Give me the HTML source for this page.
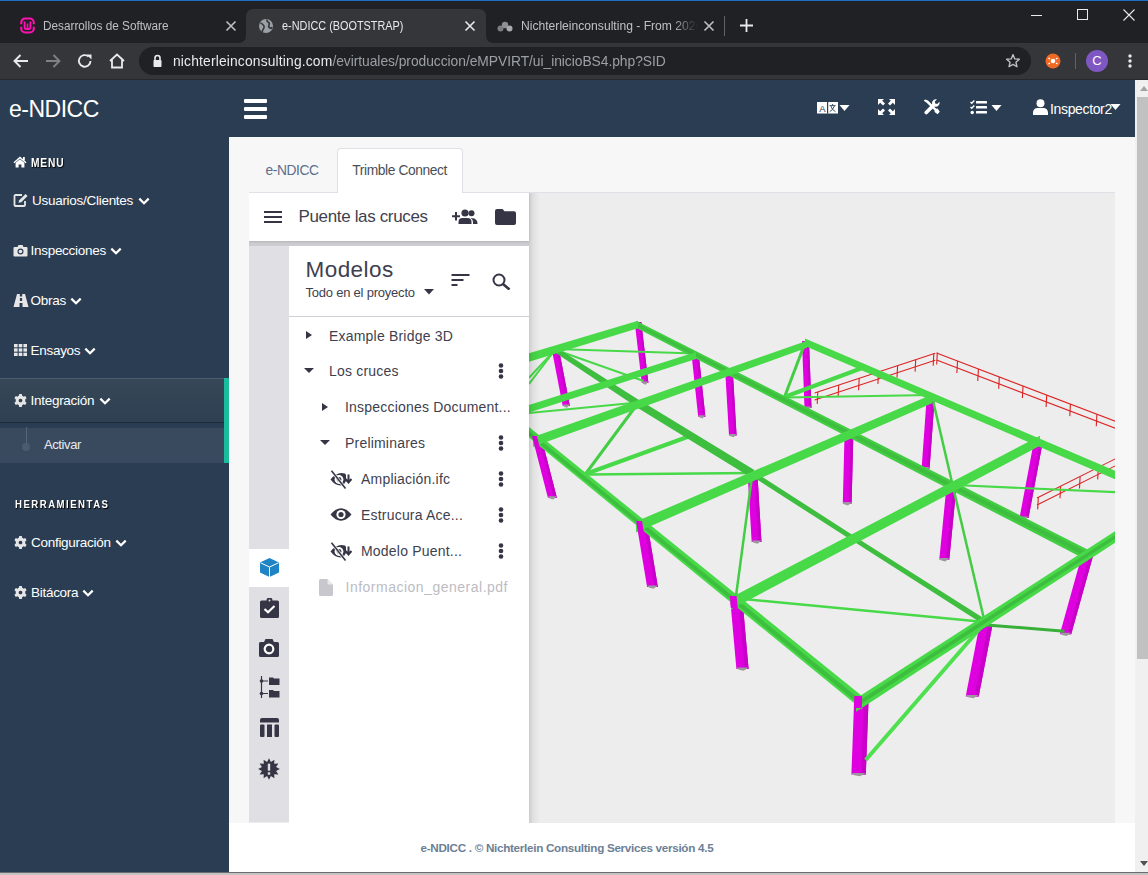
<!DOCTYPE html>
<html><head><meta charset="utf-8">
<style>
*{box-sizing:border-box;margin:0;padding:0}
html,body{width:1148px;height:875px;overflow:hidden;background:#fff;font-family:"Liberation Sans",sans-serif}
.abs{position:absolute}
#tabstrip{position:absolute;left:0;top:0;width:1148px;height:43px;background:#202124}
#topline{position:absolute;left:0;top:0;width:1148px;height:1px;background:#1c6fc1}
#toolbar{position:absolute;left:0;top:43px;width:1148px;height:37px;background:#35363a}
#omni{position:absolute;left:139px;top:47px;width:892px;height:28px;border-radius:14px;background:#202124}
.tabtxt{position:absolute;font-size:12.5px;color:#e8eaed;white-space:nowrap}
#page{position:absolute;left:0;top:80px;width:1148px;height:795px;background:#f7f7f7;overflow:hidden}
#sidebar{position:absolute;left:0;top:0;width:229px;height:795px;background:#2b3d52}
#navbar{position:absolute;left:229px;top:0;width:906px;height:57px;background:#2b3d52}
.item{font-size:13.5px;color:#fff;letter-spacing:-0.28px;white-space:nowrap;margin-top:0.7px}
.chev{margin-top:1px}
.side-h{font-size:12px;font-weight:bold;color:#fff;letter-spacing:-0.3px;text-shadow:1px 1px 1px #000}
.ttab{font-size:13.8px;letter-spacing:-0.4px;white-space:nowrap;margin-top:1.2px}
.tct{color:#403f4f;white-space:nowrap}
.tr{font-size:14px;letter-spacing:0.2px;margin-top:0.5px}
#scroll{position:absolute;left:1135px;top:0;width:13px;height:795px;background:#f0f0f0}
</style></head><body>
<div id="tabstrip"></div>
<div id="topline"></div>
<!-- tab1 -->
<svg class="abs" style="left:19px;top:17px" width="17" height="17" viewBox="0 0 17 17">
 <path d="M2.2 7.3 V5.5 a4 4 0 0 1 4-4 h4.6 a4 4 0 0 1 4 4 V7.3 M14.8 9.7 V11.5 a4 4 0 0 1-4 4 h-4.6 a4 4 0 0 1-4-4 V9.7" fill="none" stroke="#ff10b0" stroke-width="2.1"/>
 <path d="M5.6 4.6 V10.8 a1.2 1.2 0 0 0 1.2 1.2 h3.4 a1.2 1.2 0 0 0 1.2-1.2 V4.6" fill="none" stroke="#ff10b0" stroke-width="1.9"/>
 <path d="M8.5 6.5 V11.5" stroke="#ff10b0" stroke-width="1.6"/>
</svg>
<div class="tabtxt" style="left:43px;top:19px;color:#bdc1c6;transform:scaleX(0.941);transform-origin:0 0">Desarrollos de Software</div>
<svg class="abs" style="left:225px;top:20px" width="12" height="12" viewBox="0 0 12 12"><path d="M1.5 1.5 L10.5 10.5 M10.5 1.5 L1.5 10.5" stroke="#bdc1c6" stroke-width="1.6"/></svg>
<!-- tab2 active -->
<svg class="abs" style="left:238px;top:9px" width="256" height="35" viewBox="0 0 256 35">
 <path d="M0 34 Q8 34 8 26 V8 Q8 0 16 0 H240 Q248 0 248 8 V26 Q248 34 256 34 V35 H0 Z" fill="#35363a"/>
</svg>
<svg class="abs" style="left:258px;top:18px" width="16" height="16" viewBox="0 0 16 16">
 <circle cx="8" cy="8" r="7" fill="#9aa0a6"/>
 <path d="M2.5 5 Q5 6 6 8 Q6.5 10 5 11.5 Q4 13 4.5 14 M9 1.5 Q8.5 3 10 4 Q12 5 11 7 Q10 9 12 10 Q13.5 11 14 9" fill="none" stroke="#35363a" stroke-width="1.6"/>
</svg>
<div class="tabtxt" style="left:282px;top:19px;color:#e8eaed;transform:scaleX(0.87);transform-origin:0 0">e-NDICC (BOOTSTRAP)</div>
<svg class="abs" style="left:464px;top:20px" width="12" height="12" viewBox="0 0 12 12"><path d="M1.5 1.5 L10.5 10.5 M10.5 1.5 L1.5 10.5" stroke="#e8eaed" stroke-width="1.6"/></svg>
<!-- tab3 -->
<svg class="abs" style="left:497px;top:20px" width="16" height="12" viewBox="0 0 16 12">
 <circle cx="3.5" cy="8.5" r="3" fill="#7a7d80"/><circle cx="8" cy="5" r="3.2" fill="#8d9093"/><circle cx="12.5" cy="8.5" r="3" fill="#a8abae"/>
</svg>
<div class="tabtxt" style="left:521px;top:19px;color:#bdc1c6;width:182px;transform:scaleX(0.97);transform-origin:0 0;overflow:hidden;-webkit-mask-image:linear-gradient(90deg,#000 86%,transparent)">Nichterleinconsulting - From 2020</div>
<svg class="abs" style="left:703px;top:20px" width="12" height="12" viewBox="0 0 12 12"><path d="M1.5 1.5 L10.5 10.5 M10.5 1.5 L1.5 10.5" stroke="#bdc1c6" stroke-width="1.6"/></svg>
<div class="abs" style="left:724px;top:16px;width:1px;height:20px;background:#5f6368"></div>
<svg class="abs" style="left:739px;top:18px" width="15" height="15" viewBox="0 0 15 15"><path d="M7.5 1 V14 M1 7.5 H14" stroke="#e8eaed" stroke-width="1.8"/></svg>
<!-- window controls -->
<div class="abs" style="left:1031px;top:15px;width:11px;height:1px;background:#e8eaed"></div>
<div class="abs" style="left:1077px;top:9px;width:11px;height:11px;border:1px solid #e8eaed"></div>
<svg class="abs" style="left:1123px;top:9px" width="12" height="12" viewBox="0 0 12 12"><path d="M0.5 0.5 L11.5 11.5 M11.5 0.5 L0.5 11.5" stroke="#e8eaed" stroke-width="1.1"/></svg>
<!-- toolbar -->
<div id="toolbar"></div>
<div class="abs" style="left:0;top:79px;width:1148px;height:1px;background:#27282b"></div>
<svg class="abs" style="left:12px;top:53px" width="18" height="16" viewBox="0 0 18 16"><path d="M16 8 H3 M8.5 2 L2.5 8 L8.5 14" fill="none" stroke="#e8eaed" stroke-width="1.9"/></svg>
<svg class="abs" style="left:44px;top:53px" width="18" height="16" viewBox="0 0 18 16"><path d="M2 8 H15 M9.5 2 L15.5 8 L9.5 14" fill="none" stroke="#7f8184" stroke-width="1.9"/></svg>
<svg class="abs" style="left:76px;top:52px" width="18" height="18" viewBox="0 0 18 18"><path d="M14.5 9 A5.8 5.8 0 1 1 12.6 4.6" fill="none" stroke="#e8eaed" stroke-width="1.9"/><path d="M10.5 2.5 H15.5 V7.5 Z" fill="#e8eaed"/></svg>
<svg class="abs" style="left:108px;top:52px" width="18" height="18" viewBox="0 0 18 18"><path d="M2 9 L9 2.5 L16 9 M4 7.5 V15.5 H14 V7.5" fill="none" stroke="#e8eaed" stroke-width="1.8"/></svg>
<div id="omni"></div>
<svg class="abs" style="left:152px;top:54px" width="11" height="14" viewBox="0 0 11 14"><path d="M3 6 V4 a2.5 2.5 0 0 1 5 0 V6" fill="none" stroke="#e8eaed" stroke-width="1.6"/><rect x="1.5" y="6" width="8" height="7" rx="0.8" fill="#e8eaed"/></svg>
<div class="tabtxt" style="left:173px;top:53px;font-size:14.5px;color:#e8eaed;transform:scaleX(0.954);transform-origin:0 0"><span style="letter-spacing:0.17px">nichterleinconsulting.com</span><span style="color:#9aa0a6;letter-spacing:-0.05px">/evirtuales/produccion/eMPVIRT/ui_inicioBS4.php?SID</span></div>
<svg class="abs" style="left:1004px;top:52px" width="18" height="18" viewBox="0 0 24 24"><path d="M12 3.5 L14.4 9.2 L20.5 9.7 L15.9 13.7 L17.3 19.7 L12 16.5 L6.7 19.7 L8.1 13.7 L3.5 9.7 L9.6 9.2 Z" fill="none" stroke="#bdc1c6" stroke-width="1.8" stroke-linejoin="round"/></svg>
<svg class="abs" style="left:1045px;top:53px" width="16" height="16" viewBox="0 0 16 16"><circle cx="8" cy="8" r="7.5" fill="#ee6a25"/><circle cx="8" cy="8" r="2.3" fill="#fff"/><path d="M3.5 5 L5 6 M12.5 5 L11 6 M3.5 11 L5 10 M12.5 11 L11 10" stroke="#fff" stroke-width="1.4"/></svg>
<div class="abs" style="left:1075px;top:53px;width:1px;height:16px;background:#5f6368"></div>
<div class="abs" style="left:1086px;top:50px;width:22px;height:22px;border-radius:50%;background:#7e57c2;color:#fff;font-size:13px;text-align:center;line-height:22px">C</div>
<svg class="abs" style="left:1127px;top:53px" width="6" height="16" viewBox="0 0 6 16"><circle cx="3" cy="3" r="1.7" fill="#e8eaed"/><circle cx="3" cy="8" r="1.7" fill="#e8eaed"/><circle cx="3" cy="13" r="1.7" fill="#e8eaed"/></svg>
<div id="page">
  <div id="sidebar">
 <div class="abs" style="left:9px;top:16px;font-size:23px;color:#fff;letter-spacing:-0.5px">e-NDICC</div>
 <!-- MENU -->
 <svg class="abs" style="left:13px;top:76px" width="14" height="12" viewBox="0 0 14 12"><path d="M7 0.5 L13.5 6.2 L12.6 7.2 L7 2.4 L1.4 7.2 L0.5 6.2 Z" fill="#fff"/><path d="M2.6 6.8 L7 3.2 L11.4 6.8 V11.5 H8.4 V8.5 H5.6 V11.5 H2.6 Z" fill="#fff"/><rect x="10" y="1" width="1.8" height="3.5" fill="#fff"/></svg>
 <div class="abs side-h" style="left:31px;top:75.5px;letter-spacing:1px;transform:scaleX(0.85);transform-origin:0 0">MENU</div>
 <!-- items -->
 <div class="abs item" style="left:32px;top:112px">Usuarios/Clientes</div>
 <svg class="abs chev" style="left:138px;top:116px" width="12" height="9" viewBox="0 0 12 9"><path d="M1.3 1.6 L6 6.2 L10.7 1.6" fill="none" stroke="#fff" stroke-width="2.2"/></svg>
 <svg class="abs" style="left:13px;top:113px" width="16" height="14" viewBox="0 0 16 14"><path d="M9 2 H2.5 a1 1 0 0 0-1 1 V12 a1 1 0 0 0 1 1 H11 a1 1 0 0 0 1-1 V8" fill="none" stroke="#e6e6e6" stroke-width="1.8"/><path d="M5.5 9.8 L6.2 7.2 L12.5 0.9 L14.6 3 L8.3 9.3 Z" fill="#e6e6e6"/></svg>

 <div class="abs item" style="left:30.5px;top:162px">Inspecciones</div>
 <svg class="abs chev" style="left:110px;top:166px" width="12" height="9" viewBox="0 0 12 9"><path d="M1.3 1.6 L6 6.2 L10.7 1.6" fill="none" stroke="#fff" stroke-width="2.2"/></svg>
 <svg class="abs" style="left:13px;top:164px" width="15" height="13" viewBox="0 0 15 13"><path d="M1.5 3 H4.5 L5.5 1 H9.5 L10.5 3 H13.5 a1 1 0 0 1 1 1 V11.5 a1 1 0 0 1-1 1 H1.5 a1 1 0 0 1-1-1 V4 a1 1 0 0 1 1-1 Z" fill="#e6e6e6"/><circle cx="7.5" cy="7.5" r="3" fill="#2b3d52"/><circle cx="7.5" cy="7.5" r="1.8" fill="#e6e6e6"/></svg>

 <div class="abs item" style="left:30.5px;top:212px">Obras</div>
 <svg class="abs chev" style="left:70px;top:216px" width="12" height="9" viewBox="0 0 12 9"><path d="M1.3 1.6 L6 6.2 L10.7 1.6" fill="none" stroke="#fff" stroke-width="2.2"/></svg>
 <svg class="abs" style="left:13px;top:214px" width="16" height="13" viewBox="0 0 16 13"><path d="M4 0 H6.8 V2.5 H9.2 V0 H12 L15.5 13 H9.5 V9 H6.5 V13 H0.5 Z" fill="#e6e6e6"/><rect x="6.9" y="4" width="2.2" height="3" fill="#2b3d52"/></svg>

 <div class="abs item" style="left:30.5px;top:262px">Ensayos</div>
 <svg class="abs chev" style="left:84px;top:266px" width="12" height="9" viewBox="0 0 12 9"><path d="M1.3 1.6 L6 6.2 L10.7 1.6" fill="none" stroke="#fff" stroke-width="2.2"/></svg>
 <svg class="abs" style="left:14px;top:264px" width="13" height="12" viewBox="0 0 13 12"><g fill="#e6e6e6"><rect x="0" y="0" width="3.6" height="3.3"/><rect x="4.7" y="0" width="3.6" height="3.3"/><rect x="9.4" y="0" width="3.6" height="3.3"/><rect x="0" y="4.35" width="3.6" height="3.3"/><rect x="4.7" y="4.35" width="3.6" height="3.3"/><rect x="9.4" y="4.35" width="3.6" height="3.3"/><rect x="0" y="8.7" width="3.6" height="3.3"/><rect x="4.7" y="8.7" width="3.6" height="3.3"/><rect x="9.4" y="8.7" width="3.6" height="3.3"/></g></svg>

 <!-- Integracion active -->
 <div class="abs" style="left:0;top:298px;width:229px;height:44px;background:linear-gradient(#374757,#2e4053);border-top:1px solid #4e5d6c"></div>
 <div class="abs" style="left:0;top:342px;width:229px;height:1px;background:#1f2b38"></div>
 <div class="abs" style="left:0;top:347.5px;width:229px;height:35.5px;background:#3a4a5e"></div>
 <div class="abs" style="left:224px;top:298px;width:5px;height:85px;background:#1abc9c"></div>
 <div class="abs item" style="left:30.5px;top:312px">Integración</div>
 <svg class="abs chev" style="left:99px;top:316px" width="12" height="9" viewBox="0 0 12 9"><path d="M1.3 1.6 L6 6.2 L10.7 1.6" fill="none" stroke="#fff" stroke-width="2.2"/></svg>
 <svg class="abs cog" style="left:13.5px;top:313.5px" width="13" height="13" viewBox="0 0 24 24"><use href="#cogp"/></svg>
 <div class="abs" style="left:25.5px;top:347px;width:1px;height:19px;background:#566678"></div>
 <div class="abs" style="left:22px;top:363px;width:8px;height:8px;border-radius:50%;background:#4b5b6e"></div>
 <div class="abs" style="left:44px;top:357px;font-size:13px;color:#e8ebee;letter-spacing:-0.4px">Activar</div>

 <div class="abs side-h" style="left:14.5px;top:418px;letter-spacing:1.75px;font-size:11.3px;transform:scaleX(0.85);transform-origin:0 0">HERRAMIENTAS</div>
 <div class="abs item" style="left:31px;top:454px">Configuración</div>
 <svg class="abs chev" style="left:115px;top:458px" width="12" height="9" viewBox="0 0 12 9"><path d="M1.3 1.6 L6 6.2 L10.7 1.6" fill="none" stroke="#fff" stroke-width="2.2"/></svg>
 <svg class="abs cog" style="left:13.5px;top:455.5px" width="13" height="13" viewBox="0 0 24 24"><use href="#cogp"/></svg>
 <div class="abs item" style="left:31px;top:504px">Bitácora</div>
 <svg class="abs chev" style="left:82px;top:508px" width="12" height="9" viewBox="0 0 12 9"><path d="M1.3 1.6 L6 6.2 L10.7 1.6" fill="none" stroke="#fff" stroke-width="2.2"/></svg>
 <svg class="abs cog" style="left:13.5px;top:505.5px" width="13" height="13" viewBox="0 0 24 24"><use href="#cogp"/></svg>
</div>
<svg width="0" height="0" style="position:absolute"><defs>
 <path id="cogp" fill="#e6e6e6" fill-rule="evenodd" d="M9.6 0 H14.4 L15 3.4 A9 9 0 0 1 17.6 4.9 L20.8 3.7 L23.2 7.9 L20.6 10.1 A9 9 0 0 1 20.6 13.9 L23.2 16.1 L20.8 20.3 L17.6 19.1 A9 9 0 0 1 15 20.6 L14.4 24 H9.6 L9 20.6 A9 9 0 0 1 6.4 19.1 L3.2 20.3 L0.8 16.1 L3.4 13.9 A9 9 0 0 1 3.4 10.1 L0.8 7.9 L3.2 3.7 L6.4 4.9 A9 9 0 0 1 9 3.4 Z M12 8.6 A3.4 3.4 0 1 0 12.01 8.6 Z"/>
</defs></svg>

  <div id="navbar">
 <div class="abs" style="left:15px;top:19px;width:23px;height:4px;background:#fff;border-radius:1px"></div>
 <div class="abs" style="left:15px;top:27px;width:23px;height:4px;background:#fff;border-radius:1px"></div>
 <div class="abs" style="left:15px;top:35px;width:23px;height:4px;background:#fff;border-radius:1px"></div>
 <!-- translate -->
 <svg class="abs" style="left:588px;top:22px" width="22" height="12" viewBox="0 0 22 12"><rect x="0" y="0" width="21" height="11.5" fill="#fff"/><rect x="10" y="0" width="1.2" height="11.5" fill="#2b3d52"/><text x="2.2" y="9.6" font-size="9.5" font-family="Liberation Sans" fill="#2b3d52">A</text><path d="M15.6 2 V3.3 M12.6 3.6 H18.6 M13.8 4 Q15 8 18.4 9.6 M17.4 4 Q16 8 12.8 9.6" fill="none" stroke="#2b3d52" stroke-width="0.9"/></svg>
 <svg class="abs" style="left:610px;top:25px" width="11" height="6" viewBox="0 0 11 6"><path d="M0.5 0 H10.5 L5.5 6 Z" fill="#fff"/></svg>
 <!-- expand -->
 <svg class="abs" style="left:649px;top:19px" width="17" height="16" viewBox="0 0 17 16" fill="#fff"><path d="M0 0 H6 L4.2 1.8 L7 4.6 L5 6.6 L2.2 3.8 L0 6 Z"/><path d="M17 0 H11 L12.8 1.8 L10 4.6 L12 6.6 L14.8 3.8 L17 6 Z"/><path d="M0 16 H6 L4.2 14.2 L7 11.4 L5 9.4 L2.2 12.2 L0 10 Z"/><path d="M17 16 H11 L12.8 14.2 L10 11.4 L12 9.4 L14.8 12.2 L17 10 Z"/></svg>
 <!-- tools -->
 <svg class="abs" style="left:694px;top:19px" width="17" height="16" viewBox="0 0 17 16" fill="#fff"><path d="M0.8 1.8 L2 0.6 L5 1.6 L13.2 9.8 L14.6 9.6 L16.8 12.8 L14.6 15.2 L11.6 13 L11.6 11.6 L3.4 3.4 Z"/><path d="M2 12.2 L9.2 5 A3.8 3.8 0 0 1 14 0.4 L11.8 2.6 L12.2 4.6 L14.2 5 L16.4 2.8 A3.8 3.8 0 0 1 11.8 7.6 L4.6 14.8 A1.8 1.8 0 0 1 2 12.2 Z"/></svg>
 <!-- tasks -->
 <svg class="abs" style="left:741px;top:20px" width="17" height="15" viewBox="0 0 17 15" fill="#fff"><path d="M0.5 2 L1.8 3.3 L4.3 0.5" fill="none" stroke="#fff" stroke-width="1.4"/><path d="M0.5 7 L1.8 8.3 L4.3 5.5" fill="none" stroke="#fff" stroke-width="1.4"/><circle cx="2.2" cy="12.5" r="1.7"/><rect x="6" y="1" width="11" height="2.6" rx="0.5"/><rect x="6" y="6" width="11" height="2.6" rx="0.5"/><rect x="6" y="11" width="11" height="2.6" rx="0.5"/></svg>
 <svg class="abs" style="left:762px;top:25px" width="11" height="6" viewBox="0 0 11 6"><path d="M0.5 0 H10.5 L5.5 6 Z" fill="#fff"/></svg>
 <!-- user -->
 <svg class="abs" style="left:804px;top:19px" width="15" height="16" viewBox="0 0 15 16" fill="#fff"><circle cx="7.5" cy="4.2" r="4"/><path d="M0 16 V13.5 a4.5 4.5 0 0 1 4.5-4.5 H10.5 a4.5 4.5 0 0 1 4.5 4.5 V16 Z"/></svg>
 <div class="abs item" style="left:821px;top:20px;font-size:14px;letter-spacing:-0.35px">Inspector2</div>
 <svg class="abs" style="left:881px;top:24px" width="11" height="6" viewBox="0 0 11 6"><path d="M0.5 0 H10.5 L5.5 6 Z" fill="#fff"/></svg>
</div>

  <div id="content">
 <!-- tabs -->
 <div class="abs" style="left:249px;top:112px;width:866px;height:1px;background:#dee2e6"></div>
 <div class="abs" style="left:336.5px;top:68px;width:126px;height:45px;background:#fff;border:1px solid #dee2e6;border-bottom:none;border-radius:4px 4px 0 0"></div>
 <div class="abs ttab" style="left:265.5px;top:82px;color:#5b6f8c">e-NDICC</div>
 <div class="abs ttab" style="left:352.3px;top:82px;color:#495057">Trimble Connect</div>
 <!-- iframe -->
 <div id="tc" class="abs" style="left:249px;top:113px;width:866px;height:630px;background:#ededee;overflow:hidden">
  <div class="abs" style="left:0;top:0;width:40px;height:629px;background:#e0dfe4"></div>
  <div class="abs" style="left:0;top:48px;width:280px;height:5px;background:#cdcdd1"></div>
  <div class="abs" style="left:40px;top:53px;width:240px;height:577px;background:#fff"></div>
   <div class="abs" style="left:0;top:0;width:280px;height:48px;background:#fff;box-shadow:0 1px 2px rgba(0,0,0,0.12)"></div>
 </div>
<!--MODEL--><svg class="abs" style="left:529px;top:113px" width="586" height="629" viewBox="529 193 586 629"><line x1="814.6" y1="393.0" x2="935.2" y2="353.2" stroke="#dd2222" stroke-width="1.1"/><line x1="814.6" y1="400.0" x2="935.2" y2="360.2" stroke="#dd2222" stroke-width="1.1"/><line x1="817.8" y1="391.9" x2="817.2" y2="403.9" stroke="#dd2222" stroke-width="1.1"/><line x1="838.7" y1="385.0" x2="838.1" y2="397.0" stroke="#dd2222" stroke-width="1.1"/><line x1="859.2" y1="378.3" x2="858.6" y2="390.3" stroke="#dd2222" stroke-width="1.1"/><line x1="878.5" y1="371.9" x2="877.9" y2="383.9" stroke="#dd2222" stroke-width="1.1"/><line x1="897.6" y1="365.6" x2="897.0" y2="377.6" stroke="#dd2222" stroke-width="1.1"/><line x1="915.7" y1="359.6" x2="915.1" y2="371.6" stroke="#dd2222" stroke-width="1.1"/><line x1="933.8" y1="353.7" x2="933.2" y2="365.7" stroke="#dd2222" stroke-width="1.1"/><line x1="937.3" y1="352.5" x2="936.7" y2="364.5" stroke="#dd2222" stroke-width="1.1"/><line x1="936.6" y1="353.0" x2="1116.0" y2="421.5" stroke="#dd2222" stroke-width="1.1"/><line x1="936.6" y1="360.0" x2="1116.0" y2="428.5" stroke="#dd2222" stroke-width="1.1"/><line x1="957.5" y1="361.0" x2="956.9" y2="373.0" stroke="#dd2222" stroke-width="1.1"/><line x1="978.4" y1="369.0" x2="977.8" y2="381.0" stroke="#dd2222" stroke-width="1.1"/><line x1="999.3" y1="376.9" x2="998.7" y2="388.9" stroke="#dd2222" stroke-width="1.1"/><line x1="1023.0" y1="386.0" x2="1022.4" y2="398.0" stroke="#dd2222" stroke-width="1.1"/><line x1="1046.7" y1="395.0" x2="1046.1" y2="407.0" stroke="#dd2222" stroke-width="1.1"/><line x1="1070.4" y1="404.1" x2="1069.8" y2="416.1" stroke="#dd2222" stroke-width="1.1"/><line x1="1096.9" y1="414.2" x2="1096.3" y2="426.2" stroke="#dd2222" stroke-width="1.1"/><line x1="1037.0" y1="498.0" x2="1116.0" y2="458.5" stroke="#dd2222" stroke-width="1.1"/><line x1="1037.0" y1="505.0" x2="1116.0" y2="465.5" stroke="#dd2222" stroke-width="1.1"/><line x1="1038.3" y1="497.4" x2="1037.7" y2="509.4" stroke="#dd2222" stroke-width="1.1"/><line x1="1060.6" y1="486.2" x2="1060.0" y2="498.2" stroke="#dd2222" stroke-width="1.1"/><line x1="1080.1" y1="476.5" x2="1079.5" y2="488.5" stroke="#dd2222" stroke-width="1.1"/><line x1="1098.3" y1="467.4" x2="1097.7" y2="479.4" stroke="#dd2222" stroke-width="1.1"/><polygon points="634.7,322.0 641.3,322.0 648.4,383.0 641.8,383.0" fill="#de00de"/><polygon points="639.1,322.0 641.3,322.0 648.4,383.0 646.2,383.0" fill="#c800c8"/><polygon points="641.8,381.5 648.4,381.5 645.8,384.8 643.1,383.8" fill="#9a9a9a"/><polygon points="551.9,350.0 559.1,350.0 569.9,405.9 562.7,405.9" fill="#de00de"/><polygon points="556.7,350.0 559.1,350.0 569.9,405.9 567.5,405.9" fill="#c800c8"/><polygon points="562.7,404.4 569.9,404.4 567.0,407.7 564.2,406.7" fill="#9a9a9a"/><polygon points="691.4,353.0 698.6,353.0 705.4,416.7 698.2,416.7" fill="#de00de"/><polygon points="696.3,353.0 698.6,353.0 705.4,416.7 703.1,416.7" fill="#c800c8"/><polygon points="698.2,415.2 705.4,415.2 702.5,418.5 699.6,417.5" fill="#9a9a9a"/><polygon points="725.2,371.0 732.8,371.0 736.6,435.4 729.0,435.4" fill="#de00de"/><polygon points="730.3,371.0 732.8,371.0 736.6,435.4 734.1,435.4" fill="#c800c8"/><polygon points="729.0,433.9 736.6,433.9 733.6,437.2 730.5,436.2" fill="#9a9a9a"/><polygon points="802.0,341.0 809.0,341.0 811.5,408.0 804.5,408.0" fill="#de00de"/><polygon points="806.7,341.0 809.0,341.0 811.5,408.0 809.2,408.0" fill="#c800c8"/><polygon points="804.5,406.5 811.5,406.5 808.7,409.8 805.9,408.8" fill="#9a9a9a"/><polygon points="532.0,436.0 541.0,436.0 556.9,497.7 547.9,497.7" fill="#de00de"/><polygon points="538.1,436.0 541.0,436.0 556.9,497.7 554.0,497.7" fill="#c800c8"/><polygon points="547.9,496.2 556.9,496.2 553.3,499.5 549.7,498.5" fill="#9a9a9a"/><polygon points="636.1,521.0 646.9,521.0 657.9,587.0 647.1,587.0" fill="#de00de"/><polygon points="643.4,521.0 646.9,521.0 657.9,587.0 654.4,587.0" fill="#c800c8"/><polygon points="647.1,585.5 657.9,585.5 653.6,588.8 649.3,587.8" fill="#9a9a9a"/><polygon points="747.6,474.0 757.4,474.0 761.5,542.0 751.7,542.0" fill="#de00de"/><polygon points="754.2,474.0 757.4,474.0 761.5,542.0 758.3,542.0" fill="#c800c8"/><polygon points="751.7,540.5 761.5,540.5 757.6,543.8 753.7,542.8" fill="#9a9a9a"/><polygon points="844.6,432.0 853.4,432.0 851.6,503.6 842.8,503.6" fill="#de00de"/><polygon points="850.5,432.0 853.4,432.0 851.6,503.6 848.7,503.6" fill="#c800c8"/><polygon points="842.8,502.1 851.6,502.1 848.1,505.4 844.5,504.4" fill="#9a9a9a"/><polygon points="926.8,396.0 934.8,396.0 929.6,468.4 921.6,468.4" fill="#de00de"/><polygon points="932.2,396.0 934.8,396.0 929.6,468.4 927.0,468.4" fill="#c800c8"/><polygon points="921.6,466.9 929.6,466.9 926.4,470.2 923.2,469.2" fill="#9a9a9a"/><polygon points="729.9,596.0 742.1,596.0 748.6,669.0 736.4,669.0" fill="#de00de"/><polygon points="738.2,596.0 742.1,596.0 748.6,669.0 744.7,669.0" fill="#c800c8"/><polygon points="736.4,667.5 748.6,667.5 743.7,670.8 738.8,669.8" fill="#9a9a9a"/><polygon points="946.5,486.0 956.5,486.0 949.3,559.6 939.3,559.6" fill="#de00de"/><polygon points="953.2,486.0 956.5,486.0 949.3,559.6 946.0,559.6" fill="#c800c8"/><polygon points="939.3,558.1 949.3,558.1 945.3,561.4 941.3,560.4" fill="#9a9a9a"/><polygon points="1034.1,440.0 1043.1,440.0 1028.5,518.0 1019.5,518.0" fill="#de00de"/><polygon points="1040.2,440.0 1043.1,440.0 1028.5,518.0 1025.6,518.0" fill="#c800c8"/><polygon points="1019.5,516.5 1028.5,516.5 1024.9,519.8 1021.3,518.8" fill="#9a9a9a"/><polygon points="854.3,696.0 868.7,696.0 865.8,774.4 851.4,774.4" fill="#de00de"/><polygon points="864.0,696.0 868.7,696.0 865.8,774.4 861.1,774.4" fill="#c800c8"/><polygon points="851.4,772.9 865.8,772.9 860.0,776.2 854.3,775.2" fill="#9a9a9a"/><polygon points="979.5,625.0 992.5,625.0 978.7,696.5 965.7,696.5" fill="#de00de"/><polygon points="988.3,625.0 992.5,625.0 978.7,696.5 974.5,696.5" fill="#c800c8"/><polygon points="965.7,695.0 978.7,695.0 973.5,698.3 968.3,697.3" fill="#9a9a9a"/><polygon points="1081.6,556.0 1093.0,556.0 1071.2,634.3 1059.8,634.3" fill="#de00de"/><polygon points="1089.3,556.0 1093.0,556.0 1071.2,634.3 1067.5,634.3" fill="#c800c8"/><polygon points="1059.8,632.8 1071.2,632.8 1066.6,636.1 1062.1,635.1" fill="#9a9a9a"/><line x1="555.0" y1="349.0" x2="694.8" y2="353.5" stroke="#47d947" stroke-width="2.0"/><line x1="556.0" y1="350.0" x2="643.7" y2="381.0" stroke="#47d947" stroke-width="2.0"/><line x1="555.0" y1="350.0" x2="529.0" y2="377.7" stroke="#47d947" stroke-width="2.0"/><line x1="555.0" y1="350.0" x2="529.0" y2="384.0" stroke="#47d947" stroke-width="2.0"/><line x1="529.0" y1="412.9" x2="637.8" y2="402.5" stroke="#47d947" stroke-width="2.0"/><line x1="637.8" y1="403.5" x2="585.5" y2="474.0" stroke="#44cd44" stroke-width="3.0"/><line x1="587.0" y1="474.5" x2="752.3" y2="473.0" stroke="#47d947" stroke-width="2.5"/><line x1="752.3" y1="474.0" x2="736.0" y2="596.0" stroke="#44cd44" stroke-width="2.5"/><line x1="784.5" y1="397.0" x2="805.4" y2="342.0" stroke="#44cd44" stroke-width="3.0"/><line x1="784.5" y1="397.5" x2="931.0" y2="395.0" stroke="#47d947" stroke-width="2.0"/><line x1="932.9" y1="400.0" x2="952.6" y2="485.0" stroke="#44cd44" stroke-width="2.5"/><line x1="952.6" y1="485.0" x2="984.7" y2="622.0" stroke="#44cd44" stroke-width="2.5"/><line x1="954.6" y1="485.0" x2="1116.0" y2="492.2" stroke="#47d947" stroke-width="2.2"/><line x1="738.6" y1="598.6" x2="984.7" y2="622.0" stroke="#47d947" stroke-width="2.5"/><line x1="986.8" y1="625.0" x2="1064.5" y2="631.2" stroke="#38b038" stroke-width="3.0"/><line x1="865.7" y1="760.0" x2="984.7" y2="623.0" stroke="#4ee04e" stroke-width="4.0"/><polygon points="586.2,475.9 690.7,437.9 689.3,434.1 584.8,472.1" fill="#47d947"/><polygon points="785.2,398.9 865.4,368.9 864.0,365.1 783.8,395.1" fill="#47d947"/><polygon points="750.9,475.6 853.6,541.6 856.4,537.4 753.7,471.4" fill="#3ebe3e"/><polygon points="853.7,541.6 983.2,624.3 986.2,619.7 856.3,537.4" fill="#3ebe3e"/><polygon points="636.0,320.7 1088.0,549.7 1088.0,560.7 636.0,327.7" fill="#44cd44"/><polygon points="636.0,322.7 1088.0,552.7 1088.0,557.7 636.0,325.8" fill="#3ebe3e"/><polygon points="553.6,351.6 635.9,406.4 639.7,400.6 556.4,347.4" fill="#3ebe3e"/><polygon points="635.8,406.7 750.2,476.9 754.4,470.1 639.8,400.3" fill="#3ebe3e"/><polygon points="528.0,426.3 862.0,696.0 862.0,709.5 528.0,436.8" fill="#47d947"/><polygon points="528.0,430.2 862.0,701.0 862.0,706.7 528.0,434.6" fill="#3ebe3e"/><polygon points="805.0,338.5 1116.0,471.2 1116.0,479.7 805.0,346.0" fill="#47d947"/><polygon points="528.0,353.5 638.0,320.8 638.0,328.2 528.0,362.1" fill="#47d947"/><polygon points="528.0,405.4 696.0,352.0 696.0,359.0 528.0,412.9" fill="#47d947"/><polygon points="533.0,436.9 807.0,340.7 807.0,347.7 533.0,446.7" fill="#47d947"/><polygon points="636.0,521.6 932.0,394.4 932.0,403.2 636.0,532.4" fill="#47d947"/><polygon points="731.0,597.4 1040.0,435.8 1040.0,445.8 731.0,609.4" fill="#47d947"/><polygon points="856.0,698.5 1116.0,530.6 1116.0,542.1 856.0,711.7" fill="#47d947"/><polygon points="856.0,702.8 1116.0,534.3 1116.0,538.3 856.0,707.4" fill="#3ebe3e"/><polygon points="532.0,436.0 536.9,436.0 540.0,448.0 535.1,448.0" fill="#de00de"/><polygon points="636.1,521.0 642.0,521.0 644.0,533.0 638.1,533.0" fill="#de00de"/><polygon points="729.9,596.0 736.6,596.0 737.7,608.0 730.9,608.0" fill="#de00de"/><polygon points="854.3,696.0 862.2,696.0 861.8,708.0 853.9,708.0" fill="#de00de"/></svg><!--/MODEL-->
 <div class="abs" style="left:529px;top:113px;width:11px;height:630px;background:linear-gradient(90deg,rgba(0,0,0,0.14),rgba(0,0,0,0.06) 35%,rgba(0,0,0,0))"></div>
  <!-- header panel contents (abs coords inside #page: subtract 80 from y) -->
 <div class="abs" style="left:264px;top:131px;width:18px;height:2px;background:#363545"></div>
 <div class="abs" style="left:264px;top:136px;width:18px;height:2px;background:#363545"></div>
 <div class="abs" style="left:264px;top:141px;width:18px;height:2px;background:#363545"></div>
 <div class="abs tct" style="left:298.5px;top:127px;font-size:17px;letter-spacing:-0.35px">Puente las cruces</div>
 <svg class="abs" style="left:452px;top:129px" width="26" height="15" viewBox="0 0 26 15" fill="#363545"><path d="M0 6.2 H3 V3 H5 V6.2 H8 V8.2 H5 V11.4 H3 V8.2 H0 Z"/><circle cx="13" cy="4" r="3.6"/><path d="M6.5 15 V13 a4 4 0 0 1 4-4 H15.5 a4 4 0 0 1 4 4 V15 Z"/><circle cx="19.5" cy="4.3" r="3" /><path d="M18.5 9.2 H20.5 a5 5 0 0 1 5 5 V15 H21 V13 a4 4 0 0 0-2.5-3.8 Z"/></svg>
 <svg class="abs" style="left:494.5px;top:128.5px" width="21" height="16" viewBox="0 0 21 16" fill="#363545"><path d="M2 0 H7.5 L9.5 2.2 H19 a2 2 0 0 1 2 2 V14 a2 2 0 0 1-2 2 H2 a2 2 0 0 1-2-2 V2 a2 2 0 0 1 2-2 Z"/></svg>
 <!-- Modelos -->
 <div class="abs tct" style="left:305.5px;top:177px;font-size:22.5px;letter-spacing:0.45px">Modelos</div>
 <div class="abs tct" style="left:305.5px;top:205px;font-size:13px;letter-spacing:-0.22px">Todo en el proyecto</div>
 <svg class="abs" style="left:423.5px;top:209px" width="10" height="6" viewBox="0 0 10 6"><path d="M0 0 H10 L5 5.5 Z" fill="#363545"/></svg>
 <svg class="abs" style="left:451px;top:194px" width="19" height="12" viewBox="0 0 19 12" fill="#363545"><rect x="0.5" y="0" width="18" height="2"/><rect x="0.5" y="5" width="12" height="2"/><rect x="0.5" y="10" width="6" height="2"/></svg>
 <svg class="abs" style="left:491.5px;top:192.5px" width="19" height="17" viewBox="0 0 19 17"><circle cx="7" cy="7" r="5.5" fill="none" stroke="#363545" stroke-width="2"/><path d="M11 11 L17.5 16.5" stroke="#363545" stroke-width="2.6"/></svg>
 <div class="abs" style="left:289px;top:236px;width:240px;height:1px;background:#cfcfd6"></div>
 <!-- tree -->
 <svg class="abs" style="left:306px;top:251px" width="6" height="8" viewBox="0 0 6 8"><path d="M0 0 L6 4 L0 8 Z" fill="#363545"/></svg>
 <div class="abs tct tr" style="left:329px;top:247px">Example Bridge 3D</div>
 <svg class="abs" style="left:304px;top:288px" width="10" height="5" viewBox="0 0 10 5"><path d="M0 0 H10 L5 5 Z" fill="#363545"/></svg>
 <div class="abs tct tr" style="left:329px;top:282.5px">Los cruces</div>
 <svg class="abs" style="left:322px;top:323px" width="6" height="8" viewBox="0 0 6 8"><path d="M0 0 L6 4 L0 8 Z" fill="#363545"/></svg>
 <div class="abs tct tr" style="left:345px;top:318.5px">Inspecciones Document...</div>
 <svg class="abs" style="left:320px;top:360px" width="10" height="5" viewBox="0 0 10 5"><path d="M0 0 H10 L5 5 Z" fill="#363545"/></svg>
 <div class="abs tct tr" style="left:345px;top:354.5px">Preliminares</div>
 <div class="abs tct tr" style="left:361px;top:390.5px">Ampliación.ifc</div>
 <div class="abs tct tr" style="left:361px;top:426.5px">Estrucura Ace...</div>
 <div class="abs tct tr" style="left:361px;top:462.5px">Modelo Puent...</div>
 <svg class="abs" style="left:318.5px;top:499px" width="14" height="17" viewBox="0 0 14 17"><path d="M1.5 0 H8.5 L14 5.5 V15.5 a1.5 1.5 0 0 1-1.5 1.5 H1.5 a1.5 1.5 0 0 1-1.5-1.5 V1.5 a1.5 1.5 0 0 1 1.5-1.5 Z" fill="#c8c7cd"/><path d="M8.5 0 V5.5 H14" fill="#fff" opacity="0.6"/></svg>
 <div class="abs tct tr" style="left:345.5px;top:498.5px;color:#bdbcc4;letter-spacing:0.5px">Informacion_general.pdf</div>
 <!-- eye icons -->
 <svg class="abs" style="left:330px;top:389.5px" width="22" height="19" viewBox="0 0 22 19"><use href="#eyeslash"/></svg>
 <svg class="abs" style="left:330px;top:427px" width="22" height="15" viewBox="0 0 22 15"><path d="M0.5 7.5 Q11 -5 21.5 7.5 Q11 20 0.5 7.5 Z" fill="#363545"/><circle cx="11" cy="7.5" r="4.6" fill="#fff"/><circle cx="11" cy="7.5" r="2.6" fill="#363545"/></svg>
 <svg class="abs" style="left:330px;top:461.5px" width="22" height="19" viewBox="0 0 22 19"><use href="#eyeslash"/></svg>
 <!-- kebabs -->
 <svg class="abs" style="left:498px;top:283px" width="6" height="16" viewBox="0 0 6 16"><use href="#kebab"/></svg>
 <svg class="abs" style="left:498px;top:355px" width="6" height="16" viewBox="0 0 6 16"><use href="#kebab"/></svg>
 <svg class="abs" style="left:498px;top:391px" width="6" height="16" viewBox="0 0 6 16"><use href="#kebab"/></svg>
 <svg class="abs" style="left:498px;top:427px" width="6" height="16" viewBox="0 0 6 16"><use href="#kebab"/></svg>
 <svg class="abs" style="left:498px;top:463px" width="6" height="16" viewBox="0 0 6 16"><use href="#kebab"/></svg>
 <!-- rail -->
 <div class="abs" style="left:249px;top:469px;width:40px;height:38px;background:#fff"></div>
 <svg class="abs" style="left:259.5px;top:478px" width="19" height="19" viewBox="0 0 19 19"><path d="M9.5 0 L19 4.5 V14.5 L9.5 19 L0 14.5 V4.5 Z" fill="#1e84c5"/><path d="M0.5 4.8 L9.5 9 L18.5 4.8 M9.5 9 V19" fill="none" stroke="#fff" stroke-width="1"/></svg>
 <svg class="abs" style="left:259.5px;top:517.5px" width="19" height="20" viewBox="0 0 19 20"><path d="M1.5 2.5 H6.5 a3 3 0 0 1 6 0 H17.5 a1.5 1.5 0 0 1 1.5 1.5 V18.5 a1.5 1.5 0 0 1-1.5 1.5 H1.5 a1.5 1.5 0 0 1-1.5-1.5 V4 a1.5 1.5 0 0 1 1.5-1.5 Z" fill="#363545"/><circle cx="9.5" cy="2.6" r="1" fill="#e0dfe4"/><path d="M4.5 11 L8 14.3 L14.5 8" fill="none" stroke="#fff" stroke-width="2.2"/></svg>
 <svg class="abs" style="left:259px;top:558.5px" width="20" height="18" viewBox="0 0 20 18"><path d="M6.5 0 H13.5 L15 3 H18.5 a1.5 1.5 0 0 1 1.5 1.5 V16.5 a1.5 1.5 0 0 1-1.5 1.5 H1.5 a1.5 1.5 0 0 1-1.5-1.5 V4.5 a1.5 1.5 0 0 1 1.5-1.5 H5 Z" fill="#363545"/><circle cx="10" cy="10" r="4.3" fill="none" stroke="#fff" stroke-width="2.2"/></svg>
 <svg class="abs" style="left:258.5px;top:596px" width="21" height="22" viewBox="0 0 21 22" fill="#363545"><path d="M2.5 0 V22" stroke="#363545" stroke-width="1.2"/><path d="M2.5 5 H9 M2.5 17.5 H9" stroke="#363545" stroke-width="1.2"/><circle cx="2.5" cy="5" r="1.8"/><circle cx="2.5" cy="17.5" r="1.8"/><path d="M10 1.5 H14 L15 2.5 H20.5 V9 H10 Z"/><path d="M10 14 H14 L15 15 H20.5 V21.5 H10 Z"/></svg>
 <svg class="abs" style="left:259.5px;top:638px" width="19" height="19" viewBox="0 0 19 19" fill="#363545"><path d="M2 0 H17 a2 2 0 0 1 2 2 V4.5 H0 V2 a2 2 0 0 1 2-2 Z"/><rect x="0" y="6.5" width="4.5" height="12.5" rx="1"/><rect x="7" y="6.5" width="5" height="12.5"/><rect x="14.5" y="6.5" width="4.5" height="12.5" rx="1"/></svg>
 <svg class="abs" style="left:258px;top:677.5px" width="22" height="22" viewBox="0 0 24 24"><path fill="#363545" d="M12.00 0.20 L14.07 4.27 L17.90 1.78 L17.66 6.34 L22.22 6.10 L19.73 9.93 L23.80 12.00 L19.73 14.07 L22.22 17.90 L17.66 17.66 L17.90 22.22 L14.07 19.73 L12.00 23.80 L9.93 19.73 L6.10 22.22 L6.34 17.66 L1.78 17.90 L4.27 14.07 L0.20 12.00 L4.27 9.93 L1.78 6.10 L6.34 6.34 L6.10 1.78 L9.93 4.27 Z"/><rect x="10.7" y="6.2" width="2.6" height="7.6" fill="#e0dfe4"/><rect x="10.7" y="15.6" width="2.6" height="2.6" fill="#e0dfe4"/></svg>
 <!-- footer -->
 <div class="abs" style="left:229px;top:743px;width:906px;height:49px;background:#fff"></div>
 <div class="abs" style="left:420.5px;top:761px;font-size:11.7px;font-weight:bold;color:#6d7f96;white-space:nowrap;letter-spacing:-0.3px">e-NDICC . © Nichterlein Consulting Services versión 4.5</div>
</div>
<div id="scroll">
 <svg class="abs" style="left:5px;top:6px" width="8" height="5" viewBox="0 0 8 5"><path d="M0 5 L4 0 L8 5 Z" fill="#a3a3a3"/></svg>
 <div class="abs" style="left:2px;top:17px;width:11px;height:562px;background:#c1c1c1"></div>
 <svg class="abs" style="left:5px;top:781px" width="8" height="5" viewBox="0 0 8 5"><path d="M0 0 L4 5 L8 0 Z" fill="#505050"/></svg>
</div>
<div class="abs" style="left:0;top:791.5px;width:1148px;height:1.5px;background:#6b6b6b"></div><div class="abs" style="left:0;top:793px;width:1148px;height:2px;background:#c4c4c4"></div>

</div>
<svg width="0" height="0" style="position:absolute"><defs>
 <g id="kebab" fill="#363545"><circle cx="3" cy="2.5" r="2.3"/><circle cx="3" cy="8" r="2.3"/><circle cx="3" cy="13.5" r="2.3"/></g>
 <g id="eyeslash"><path d="M0.5 9.5 Q7 1 15 3.5 L16 5 V11 L13.5 15 Q6 17 0.5 9.5 Z" fill="#363545"/><circle cx="9" cy="9.5" r="4.4" fill="#fff"/><circle cx="9" cy="9.5" r="2.4" fill="#363545"/><path d="M1.5 0.8 L15.5 18.5" stroke="#fff" stroke-width="3"/><path d="M1.5 0.8 L15.5 18.5" stroke="#363545" stroke-width="1.6"/><path d="M18.5 4.5 V12 M15.5 9 L18.5 12.5 L21.5 9" fill="none" stroke="#363545" stroke-width="2"/></g>
</defs></svg>
</body></html>
